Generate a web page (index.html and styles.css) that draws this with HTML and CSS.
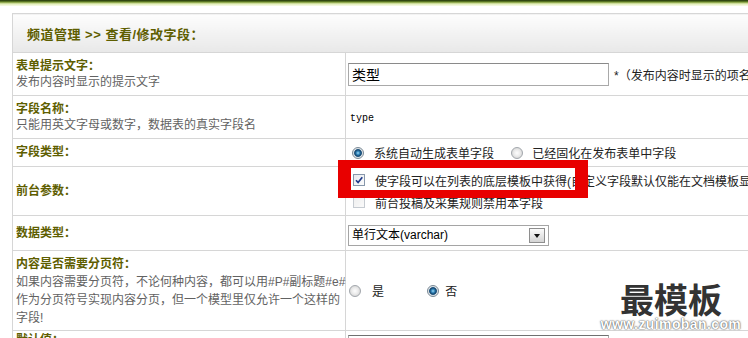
FILE: index.html
```html
<!DOCTYPE html>
<html lang="zh-CN">
<head>
    <meta charset="UTF-8">
    <title>查看/修改字段</title>
    <link rel="stylesheet" href="styles.css">
</head>
<body>
<div class="div_top"></div>
<div class="div_main">
    <form id="formfield" method="post">
        <table class="fieldtable" cellspacing="0" cellpadding="0">
            <colgroup><col class="col_l"><col class="col_r"></colgroup>
            <tr class="tr_head">
                <td colspan="2">频道管理 &gt;&gt; 查看/修改字段：</td>
            </tr>
            <tr class="tr_a">
                <td class="td_l"><b>表单提示文字：</b><br>发布内容时显示的提示文字</td>
                <td class="td_r"><input type="text" class="ipt" name="itemname" value="类型"><span class="tip">*（发布内容时显示的项名字）</span></td>
            </tr>
            <tr class="tr_a">
                <td class="td_l"><b>字段名称：</b><br>只能用英文字母或数字，数据表的真实字段名</td>
                <td class="td_r"><span class="fname">type</span></td>
            </tr>
            <tr class="tr_b">
                <td class="td_l"><b>字段类型：</b></td>
                <td class="td_r">
                    <label class="opt"><input type="radio" class="rd" name="isnull" value="0" checked>系统自动生成表单字段</label>
                    <label class="opt"><input type="radio" class="rd" name="isnull" value="1">已经固化在发布表单中字段</label>
                </td>
            </tr>
            <tr class="tr_c">
                <td class="td_l"><b>前台参数：</b></td>
                <td class="td_r">
                    <div class="ckline"><span class="ck"><svg width="10" height="10" viewBox="0 0 10 10"><path d="M2 5.2 L4.1 7.5 L8.3 2.2" fill="none" stroke="#1f3a8a" stroke-width="1.7"/></svg></span>使字段可以在列表的底层模板中获得(自定义字段默认仅能在文档模板显示)</div>
                    <div class="ckline"><span class="ck ck_off"></span>前台投稿及采集规则禁用本字段</div>
                </td>
            </tr>
            <tr class="tr_d">
                <td class="td_l"><b>数据类型：</b></td>
                <td class="td_r">
                    <span class="selwrap">
                        <select class="sel" name="dtype"><option value="varchar">单行文本(varchar)</option></select>
                        <span class="selbtn"></span>
                    </span>
                </td>
            </tr>
            <tr class="tr_e">
                <td class="td_l"><b>内容是否需要分页符：</b><br><span class="desc">如果内容需要分页符，不论何种内容，都可以用#P#副标题#e#<br>作为分页符号实现内容分页，但一个模型里仅允许一个这样的<br>字段!</span></td>
                <td class="td_r">
                    <label class="opt yn"><input type="radio" class="rd" name="spage" value="1">是</label>
                    <label class="opt yn"><input type="radio" class="rd" name="spage" value="0" checked>否</label>
                </td>
            </tr>
            <tr class="tr_f">
                <td class="td_l"><b>默认值：</b></td>
                <td class="td_r"><input type="text" class="ipt ipt_def" name="vdefault"></td>
            </tr>
        </table>
    </form>
</div>
<div class="redmark"></div>
<div class="wm">
    <div class="wm_t">最模板</div>
    <div class="wm_u">www.zuimoban.com</div>
</div>
</body>
</html>
```

FILE: styles.css
```css
html,body,div{
    margin: 0;
    padding: 0;
}
html,body{
    overflow: hidden;
    background-color: #fff;
}
body{
    font: 12px "Liberation Sans", "Noto Sans CJK SC", sans-serif;
    color: #333;
}
.div_top{
    height: 6px;
    background: linear-gradient(#23360b 0, #3f5a17 1px, #6e8b2d 2px, #b7cc78 3px, #e3eebc 4px, #f8fbea 6px);
}
.div_main{
    padding: 7px 0 0 12px;
}
.fieldtable{
    border-collapse: collapse;
    table-layout: fixed;
    width: 1100px;
}
.col_l{
    width: 333px;
}
.fieldtable td{
    border: 1px solid #d6d6d6;
    padding: 0;
}
.tr_head td{
    height: 38px;
    padding-left: 14px;
    font-size: 13px;
    font-weight: bold;
    letter-spacing: 0.5px;
    color: #5e5e00;
    background: linear-gradient(#fdfdfd, #e8e8e8);
}
.td_l{
    padding-left: 3px !important;
    line-height: 15px;
    color: #626262;
    white-space: nowrap;
}
.td_l b{
    color: #5e5e00;
}
.td_r{
    padding-left: 2px !important;
    white-space: nowrap;
    color: #222;
}
.tr_a td{
    height: 42px;
}
.tr_a .td_l{
    line-height: 16px;
}
.tr_b td{
    height: 27px;
}
.tr_c td{
    height: 48px;
}
.tr_d td{
    height: 34px;
}
.tr_e td{
    height: 79px;
}
.tr_e .td_l{
    line-height: 18px;
}
.tr_f td{
    height: 40px;
    vertical-align: top;
}
.tr_f .td_l{
    padding-top: 2px;
}
.ipt{
    box-sizing: border-box;
    width: 261px;
    height: 23px;
    margin: 0;
    padding: 0 3px;
    border: 1px solid #a9a9a9;
    border-top-color: #8a8a8a;
    font: 14px "Liberation Sans", "Noto Sans CJK SC", sans-serif;
    color: #000;
    vertical-align: middle;
}
.ipt_def{
    margin-top: 4px;
    border-top-color: #707070;
}
.tip{
    margin-left: 5px;
    vertical-align: middle;
}
.fname{
    margin-left: 2px;
    font: 10px "Liberation Mono", monospace;
    color: #000;
}
.opt{
    display: inline-flex;
    align-items: center;
    vertical-align: middle;
}
.opt + .opt{
    margin-left: 2px;
}
.rd{
    appearance: none;
    box-sizing: border-box;
    width: 12px;
    height: 12px;
    margin: 0 10px 0 4px;
    border: 1px solid #a3a8ad;
    border-radius: 50%;
    background: radial-gradient(circle, #fdfdfd 0, #ececec 3px, #d2d2d2 6px);
}
.opt + .opt .rd{
    margin-left: 12px;
    margin-right: 9px;
}
.rd:checked{
    border-color: #7b8a96;
    background: radial-gradient(circle, #a8dcf4 0, #3a8fc4 1.5px, #174a73 3px, #2f5f86 3.6px, #d9dfe4 4.3px, #f4f4f4 6px);
}
.yn .rd{
    margin: 0 11px 0 1px;
}
.opt.yn + .opt.yn{
    margin-left: 28px;
}
.opt.yn + .opt.yn .rd{
    margin: 0 6px 0 12px;
}
.ckline{
    display: flex;
    align-items: center;
    height: 22px;
}
.ck{
    box-sizing: border-box;
    display: inline-flex;
    align-items: center;
    justify-content: center;
    width: 12px;
    height: 12px;
    margin: 0 10px 0 5px;
    border: 1px solid #8797ab;
    background: linear-gradient(135deg, #e6e9ee, #fbfbfc);
}
.ck_off{
    border-color: #c6cbd1;
    background: linear-gradient(135deg, #eeeeee, #fafafa);
}
.selwrap{
    position: relative;
    display: inline-block;
    vertical-align: middle;
    margin-top: 4px;
}
.sel{
    appearance: none;
    box-sizing: border-box;
    width: 201px;
    height: 21px;
    margin: 0;
    padding: 0 0 0 3px;
    border: 1px solid #a5a5a5;
    background-color: #fff;
    font: 12px "Liberation Sans", "Noto Sans CJK SC", sans-serif;
    color: #000;
}
.selbtn{
    position: absolute;
    right: 4px;
    top: 3px;
    box-sizing: border-box;
    width: 16px;
    height: 15px;
    border: 1px solid #8e8e8e;
    background: linear-gradient(#fbfbfb, #d4d4d4);
}
.selbtn::after{
    content: "";
    position: absolute;
    left: 4px;
    top: 5px;
    border-left: 3px solid transparent;
    border-right: 3px solid transparent;
    border-top: 4px solid #111;
}
.redmark{
    position: absolute;
    left: 338px;
    top: 160px;
    box-sizing: border-box;
    width: 250px;
    height: 38px;
    border: 8px solid #e80000;
    border-left-width: 13px;
    border-right-width: 13px;
}
.wm{
    position: absolute;
    left: 596px;
    top: 279px;
    width: 150px;
    text-align: center;
}
.wm_t{
    font: bold 34px/40px "Noto Sans CJK SC", sans-serif;
    color: #333;
}
.wm_u{
    margin-top: -2px;
    font: bold 14px/14px "Liberation Sans", sans-serif;
    letter-spacing: 0.4px;
    color: #fff;
    text-shadow: 0 0 2px #555, 0 0 1px #444;
}
```
